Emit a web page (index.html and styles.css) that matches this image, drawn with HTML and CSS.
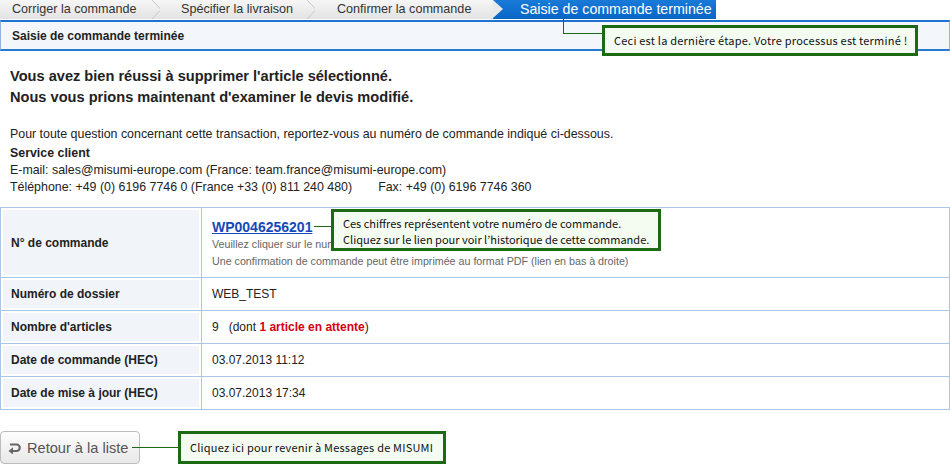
FILE: index.html
```html
<!DOCTYPE html>
<html lang="fr">
<head>
    <meta charset="UTF-8">
    <title>Saisie de commande terminée</title>
    <link rel="stylesheet" href="styles.css">
</head>
<body>
<div class="page">
    <div class="steps">
        <div class="step">Corriger la commande</div>
        <div class="step">Spécifier la livraison</div>
        <div class="step">Confirmer la commande</div>
        <div class="step active">Saisie de commande terminée</div>
    </div>
    <div class="title-bar">Saisie de commande terminée</div>

    <div class="callout-line line-step"></div>
    <div class="callout callout-step">Ceci est la dernière étape. Votre processus est terminé !</div>

    <div class="message">
        <p>Vous avez bien réussi à supprimer l'article sélectionné.</p>
        <p>Nous vous prions maintenant d'examiner le devis modifié.</p>
    </div>

    <div class="contact">
        <p class="contact-intro">Pour toute question concernant cette transaction, reportez-vous au numéro de commande indiqué ci-dessous.</p>
        <p class="contact-title">Service client</p>
        <p>E-mail: sales@misumi-europe.com (France: team.france@misumi-europe.com)</p>
        <p>Téléphone: +49 (0) 6196 7746 0 (France +33 (0) 811 240 480)<span class="fax">Fax: +49 (0) 6196 7746 360</span></p>
    </div>

    <div class="table-wrap">
        <table class="details">
            <tr class="row-order">
                <th>N° de commande</th>
                <td>
                    <a class="order-link" href="#">WP0046256201</a>
                    <span class="note">Veuillez cliquer sur le numéro de commande pour voir l'historique de cette commande.</span>
                    <span class="note">Une confirmation de commande peut être imprimée au format PDF (lien en bas à droite)</span>
                </td>
            </tr>
            <tr>
                <th>Numéro de dossier</th>
                <td>WEB_TEST</td>
            </tr>
            <tr>
                <th>Nombre d'articles</th>
                <td>9 &nbsp; (dont <strong class="pending">1 article en attente</strong>)</td>
            </tr>
            <tr>
                <th>Date de commande (HEC)</th>
                <td>03.07.2013 11:12</td>
            </tr>
            <tr>
                <th>Date de mise à jour (HEC)</th>
                <td>03.07.2013 17:34</td>
            </tr>
        </table>
        <div class="callout-line line-order"></div>
        <div class="callout callout-order">Ces chiffres représentent votre numéro de commande.<br>Cliquez sur le lien pour voir l’historique de cette commande.</div>
    </div>

    <div class="actions">
        <button class="back-btn" type="button">
            <svg width="14" height="12" viewBox="0 0 14 12">
                <path d="M2 2.5 H8.5 A3.2 3.2 0 0 1 8.5 9 H4.5" fill="none" stroke="#666" stroke-width="2.2"/>
                <path d="M0.5 9 L5 5.2 L5 12.5 Z" fill="#666"/>
            </svg>
            Retour à la liste
        </button>
        <div class="callout-line line-back"></div>
        <div class="callout callout-back">Cliquez ici pour revenir à Messages de MISUMI</div>
    </div>
</div>
</body>
</html>
```

FILE: styles.css
```css
body {
    margin: 0;
    font-family: "Liberation Sans", Arial, sans-serif;
    color: #222;
    background: #fff;
}

p { margin: 0 }

.page {
    position: relative;
    width: 950px;
}

/* step bar */
.steps {
    display: flex;
    height: 19px;
    font-size: 12.6px;
    line-height: 19px;
}

.step {
    position: relative;
    color: #333;
    background: linear-gradient(#f6f6f6, #e3e3e3);
    padding-left: 12px;
}
.step:nth-child(1) { width: 148px }
.step:nth-child(2) { width: 134px; padding-left: 21px }
.step:nth-child(3) { width: 156px; padding-left: 22px }

.step:nth-child(1)::after,
.step:nth-child(2)::after {
    content: "";
    position: absolute;
    right: -2px;
    top: 0;
    width: 10px;
    height: 19px;
    background: url("data:image/svg+xml;utf8,<svg xmlns='http://www.w3.org/2000/svg' width='10' height='19'><path d='M0 0 L9 9.5 L0 19' fill='none' stroke='%23c8c8c8' stroke-width='1'/></svg>") no-repeat;
}

.step.active {
    width: 196px;
    padding-left: 27px;
    font-size: 14.2px;
    color: #fff;
    background: linear-gradient(#1a7ad8, #0865c6);
}
.step.active::before {
    content: "";
    position: absolute;
    left: 0;
    top: 0;
    border-left: 10px solid #e9e9e9;
    border-top: 9.5px solid transparent;
    border-bottom: 9.5px solid transparent;
}

.title-bar {
    margin-top: 1px;
    height: 27px;
    line-height: 28px;
    padding-left: 11px;
    font-size: 12px;
    font-weight: bold;
    color: #222;
    background: #f3f7fb;
    border: 1px solid #8fb3de;
    border-top: 2px solid #1e72d2;
    border-bottom: 2px solid #2a78d0;
}

/* callouts */
.callout {
    position: absolute;
    z-index: 2;
    box-sizing: border-box;
    background: #f4fbf1;
    border: 3px solid #1c6b14;
    font-family: "Noto Sans CJK JP", "DejaVu Sans", sans-serif;
    font-size: 11px;
    color: #111;
    padding: 0 9px;
    white-space: nowrap;
}

.callout-line {
    position: absolute;
    z-index: 1;
    border-color: #1c6b14;
    border-style: solid;
    border-width: 0;
}

.callout-step {
    left: 602px;
    top: 25px;
    width: 316px;
    height: 31px;
    line-height: 25px;
    letter-spacing: 0.22px;
}
.line-step {
    left: 563px;
    top: 18px;
    width: 39px;
    height: 15px;
    border-left-width: 1px;
    border-bottom-width: 1px;
}

/* messages */
.message {
    padding: 15px 10px 0;
    font-size: 14.6px;
    font-weight: bold;
    line-height: 21px;
    color: #222;
}

.contact {
    padding: 18px 10px 0;
    font-size: 12.4px;
    line-height: 17px;
    color: #222;
}
.contact-intro { margin-bottom: 2px }
.contact-title { font-weight: bold }
.fax { margin-left: 26px }

/* table */
.table-wrap {
    position: relative;
    margin-top: 11px;
}

.details {
    width: 950px;
    border-collapse: collapse;
    font-size: 12px;
}

.details th,
.details td {
    border: 1px solid #a9c6e6;
    height: 32px;
    padding: 0 10px;
    text-align: left;
}

.details th {
    width: 180px;
    background: #f1f5fa;
    box-shadow: inset 0 0 0 2px #fff;
    font-weight: bold;
    color: #222;
}

.details td {
    color: #222;
}

.row-order th,
.row-order td { height: 69px }

.order-link {
    display: block;
    font-size: 14px;
    font-weight: bold;
    color: #1549b8;
    line-height: 18px;
    margin-top: 3px;
}

.note {
    display: block;
    font-size: 10.7px;
    color: #666;
    line-height: 17px;
}

.pending { color: #d4000f }

.callout-order {
    left: 331px;
    top: 2px;
    width: 330px;
    height: 42px;
    line-height: 16px;
    padding-top: 3px;
    padding-left: 9px;
}
.line-order {
    left: 314px;
    top: 19px;
    width: 17px;
    border-top-width: 1px;
}

/* bottom action */
.actions {
    position: relative;
    display: flex;
    align-items: center;
    margin-top: 21px;
    height: 33px;
}

.back-btn {
    display: flex;
    align-items: center;
    gap: 5px;
    height: 33px;
    width: 140px;
    padding: 0 0 0 7px;
    font-family: "Liberation Sans", Arial, sans-serif;
    font-size: 14.6px;
    color: #555;
    background: linear-gradient(#fdfdfd, #e8e8e8);
    border: 1px solid #bcbcbc;
    border-radius: 4px;
}

.line-back {
    left: 132px;
    top: 16px;
    width: 46px;
    border-top-width: 1px;
}

.callout-back {
    left: 178px;
    top: 0;
    width: 268px;
    height: 33px;
    line-height: 27px;
    letter-spacing: 0.2px;
}
```
